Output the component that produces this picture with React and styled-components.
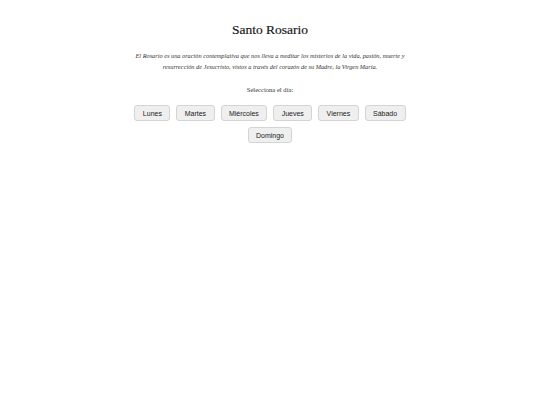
import React from 'react';
import styled, { createGlobalStyle } from 'styled-components';

const GlobalStyle = createGlobalStyle`
  body {
    margin: 0;
    background: #fff;
    font-family: "Liberation Serif", "Times New Roman", serif;
    color: #222;
  }
`;

const Page = styled.div`
  display: flex;
  flex-direction: column;
  align-items: center;
  padding-top: 22px;
`;

const Title = styled.h1`
  font-size: 13.5px;
  font-weight: normal;
  margin: 0 0 12px 0;
  color: #1a1a1a;
  -webkit-text-stroke: 0.2px #1a1a1a;
`;

const Intro = styled.p`
  font-style: italic;
  font-size: 6.3px;
  line-height: 11px;
  max-width: 290px;
  text-align: center;
  margin: 0 0 14px 0;
  color: #333;
`;

const Prompt = styled.p`
  font-size: 6.6px;
  margin: 0 0 12px 0;
  color: #333;
`;

const DayList = styled.div`
  display: flex;
  flex-wrap: wrap;
  justify-content: center;
  gap: 6px;
  max-width: 280px;
`;

const DayButton = styled.button`
  font-family: "Liberation Sans", Arial, sans-serif;
  font-size: 7px;
  height: 16px;
  padding: 0 7.4px;
  background: #efefef;
  border: 1px solid #d4d4d4;
  border-radius: 3px;
  color: #222;
  cursor: pointer;
`;

const days = ['Lunes', 'Martes', 'Miércoles', 'Jueves', 'Viernes', 'Sábado', 'Domingo'];

const App = () => (
  <>
    <GlobalStyle />
    <Page>
      <Title>Santo Rosario</Title>
      <Intro>
        El Rosario es una oración contemplativa que nos lleva a meditar los misterios de la vida, pasión, muerte y
        resurrección de Jesucristo, vistos a través del corazón de su Madre, la Virgen María.
      </Intro>
      <Prompt>Selecciona el día:</Prompt>
      <DayList>
        {days.map((d) => (
          <DayButton key={d}>{d}</DayButton>
        ))}
      </DayList>
    </Page>
  </>
);

export default App;
